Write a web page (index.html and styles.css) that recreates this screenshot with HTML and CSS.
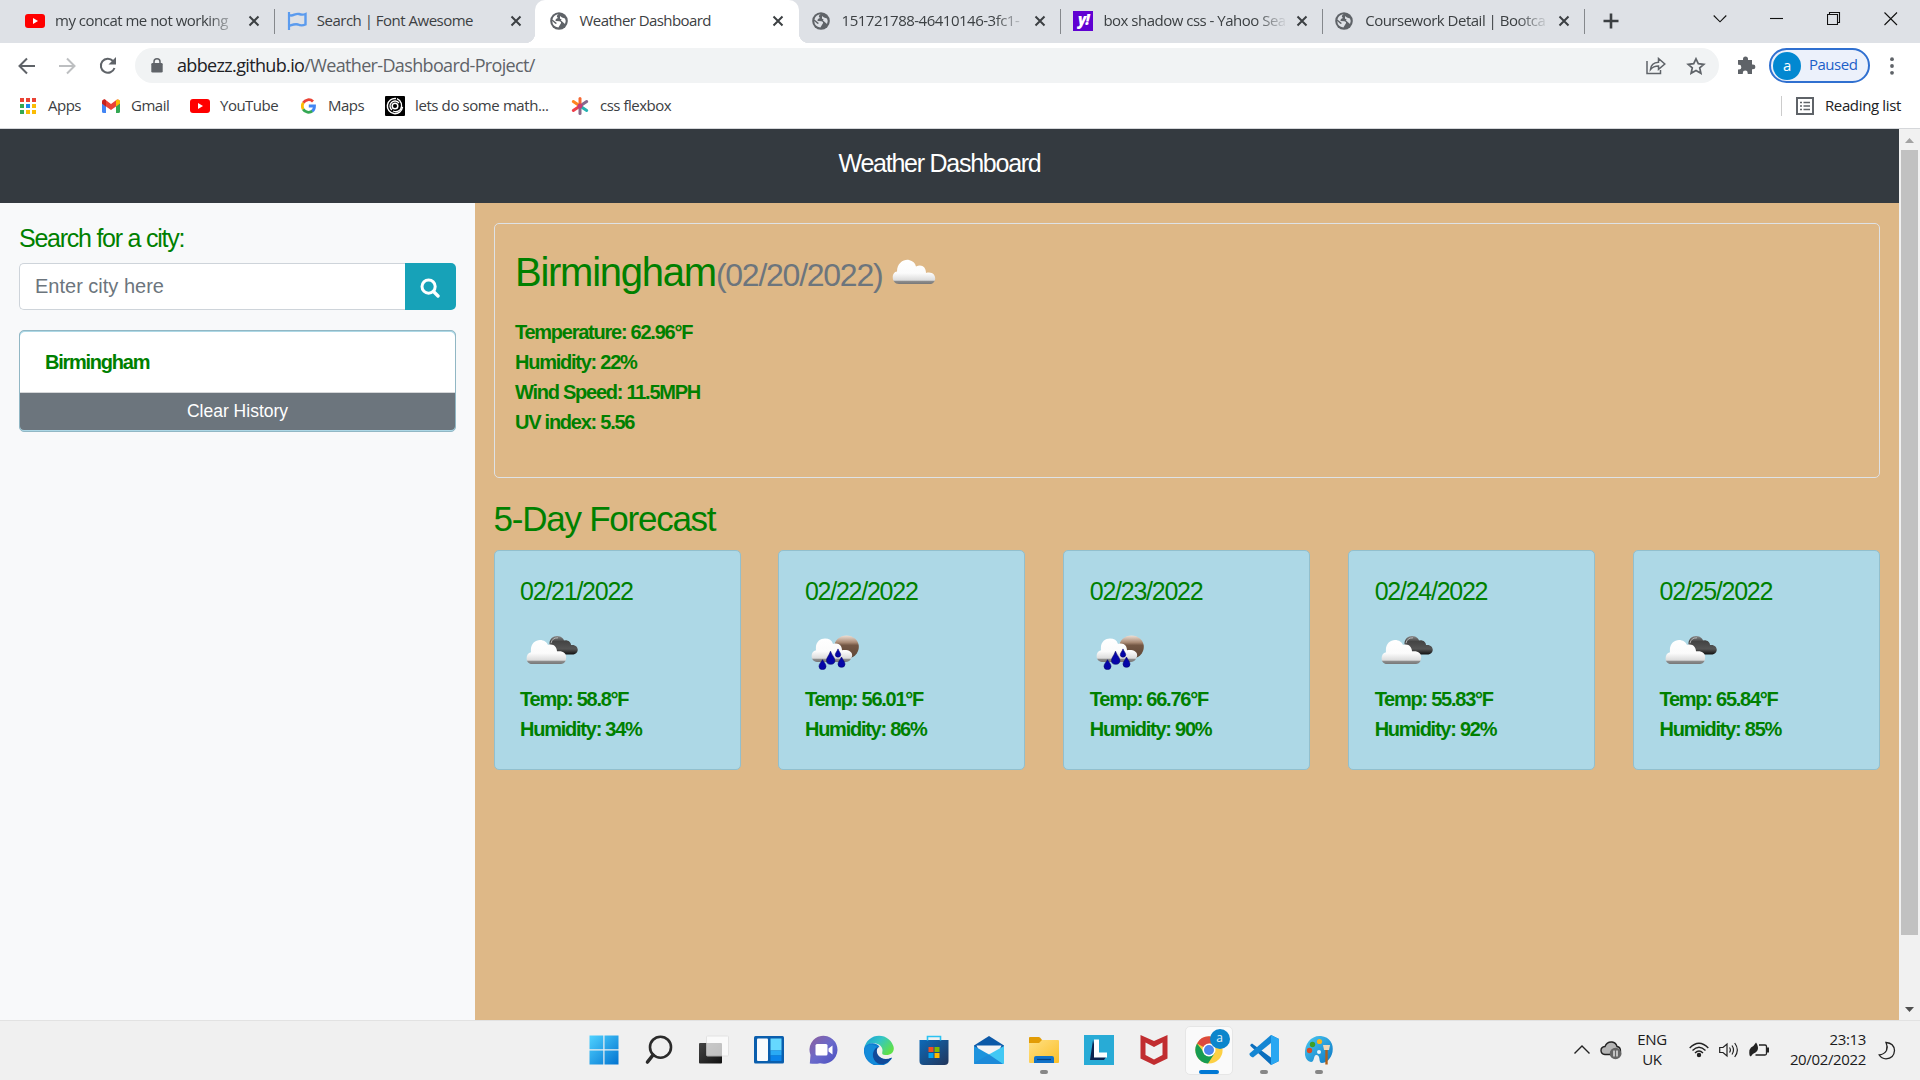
FILE: index.html
```html
<!DOCTYPE html>
<html lang="en">
<head>
<meta charset="utf-8">
<title>Weather Dashboard</title>
<link rel="stylesheet" href="styles.css">
</head>
<body>
<svg class="defs" width="0" height="0" aria-hidden="true">
  <defs>
    <linearGradient id="cloudFill" x1="0" y1="0" x2="0" y2="1"><stop offset="0" stop-color="#fff"/><stop offset=".55" stop-color="#fbfbfb"/><stop offset=".84" stop-color="#dcdcdc"/><stop offset=".89" stop-color="#8c8c8c"/><stop offset="1" stop-color="#777"/></linearGradient>
    <linearGradient id="darkCloud" x1="0" y1="0" x2="0" y2="1"><stop offset="0" stop-color="#8a8a8a"/><stop offset=".3" stop-color="#444"/><stop offset=".7" stop-color="#555"/><stop offset="1" stop-color="#111"/></linearGradient>
    <linearGradient id="moonFill" x1="0" y1="0" x2="0" y2="1"><stop offset="0" stop-color="#efe0d6"/><stop offset=".3" stop-color="#a98a74"/><stop offset=".42" stop-color="#735744"/><stop offset="1" stop-color="#5e4636"/></linearGradient>
    <linearGradient id="winFill" x1="0" y1="0" x2="1" y2="1"><stop offset="0" stop-color="#4fd2ff"/><stop offset="1" stop-color="#0273d0"/></linearGradient>
    <linearGradient id="chatFill" x1="0" y1="0" x2="1" y2="1"><stop offset="0" stop-color="#8f5f9c"/><stop offset=".5" stop-color="#6a6acb"/><stop offset="1" stop-color="#4b4fc0"/></linearGradient>
    <linearGradient id="edgeTop" x1="0" y1="0" x2="1" y2=".6"><stop offset="0" stop-color="#159bd7"/><stop offset=".5" stop-color="#34c6c4"/><stop offset="1" stop-color="#5fe04a"/></linearGradient>
    <linearGradient id="storeFill" x1="0" y1="0" x2="1" y2="1"><stop offset="0" stop-color="#0d6ab9"/><stop offset="1" stop-color="#21355a"/></linearGradient>
    <linearGradient id="folderFill" x1="0" y1="0" x2="1" y2="1"><stop offset="0" stop-color="#ffe083"/><stop offset="1" stop-color="#fbbf28"/></linearGradient>
    <linearGradient id="viewFill" x1="0" y1="0" x2="1" y2="1"><stop offset="0" stop-color="#444"/><stop offset="1" stop-color="#111"/></linearGradient>
    <linearGradient id="paintFill" x1="0" y1="0" x2="1" y2="1"><stop offset="0" stop-color="#4bc9f1"/><stop offset="1" stop-color="#0d78c5"/></linearGradient>
    <symbol id="globe" viewBox="0 0 18 18"><circle cx="9" cy="9" r="8.8" fill="#5f6368"/><path d="M8.6 2.2 Q5.3 4 8 6 Q5 7 5.6 9 L9.5 9.2 Q12 10 10.5 12 L8.4 15.6 Q2.6 14.6 2.2 9 L5 11.5 Q6 12.5 6.8 11 L2.4 7.4 Q3.8 2.7 8.6 2.2Z M10 4 L12 5.5 L15 6.5 Q16.5 9 15 12 L12.7 10 L10.8 8.2 Q12.5 7.3 10 6.8Z" fill="#dee1e6"/></symbol>
    <symbol id="globeWhite" viewBox="0 0 18 18"><circle cx="9" cy="9" r="8.8" fill="#5f6368"/><path d="M8.6 2.2 Q5.3 4 8 6 Q5 7 5.6 9 L9.5 9.2 Q12 10 10.5 12 L8.4 15.6 Q2.6 14.6 2.2 9 L5 11.5 Q6 12.5 6.8 11 L2.4 7.4 Q3.8 2.7 8.6 2.2Z M10 4 L12 5.5 L15 6.5 Q16.5 9 15 12 L12.7 10 L10.8 8.2 Q12.5 7.3 10 6.8Z" fill="#fff"/></symbol>
    <symbol id="youtube" viewBox="0 0 20 14"><rect width="20" height="14" rx="3" fill="#f00"/><path d="M8 4 L13 7 L8 10Z" fill="#fff"/></symbol>
    <symbol id="close" viewBox="0 0 12 12"><path d="M1.5 1.5 L10.5 10.5 M10.5 1.5 L1.5 10.5" stroke="#3c4043" stroke-width="2"/></symbol>
    <symbol id="cloud" viewBox="0 0 44 28"><path d="M7 27 C-1 27 -1 14 5 13.5 C5 4 12 0 17 1 C21 2 23 4 24 8 C30 5 34 9 34 15 C41 13 44 18 43 22.500 C42 26 40 27 37 27Z" fill="url(#cloudFill)"/></symbol>
    <symbol id="broken" viewBox="0 0 52 31" preserveAspectRatio="none"><path d="M24 12 C22 5 26 0 31 0 C36 0 38 4 38 5 C42 4 45 7 45 10 C51 9 53 15 51 18 C50 20 48 20.500 46 20.500 L34 20.500Z" fill="url(#darkCloud)"/><path d="M25 8 Q26 2 32 2" stroke="#bbb" fill="none"/><path d="M6 31 C-1 31 -1 19 5 18 C4 9 9 4.500 14 4.500 C18 4.500 21 7 22 10 C28 8 31 13 31 17 C38 16 41 20 40 25 C40 28 38 31 35 31Z" fill="url(#cloudFill)"/></symbol>
    <symbol id="rain" viewBox="0 0 48 39" preserveAspectRatio="none"><ellipse cx="35.500" cy="13.500" rx="12.300" ry="13" fill="url(#moonFill)"/><path d="M6 30 C-1 30 -1 18 5 17 C4 8 9 4 14 4 C18 4 21 6 22 10 C28 8 31 12 31 17 C38 16 42 19 41 24 C40 28 38 30 35 30Z" fill="url(#cloudFill)"/><g fill="#0505a8" stroke="#02026a" stroke-width=".6"><path d="M11.500 27.500 C10 31 8 32 8 35 A3.500 3.500 0 0 0 15 35 C15 32 13 31 11.500 27.500Z"/><path d="M19.500 18 C18 23 15.500 25 15.500 28.500 A4.200 4.200 0 0 0 23.900 28.500 C23.900 25 21 23 19.500 18Z"/><path d="M30.500 24.500 C29 28 27 30 27 32.500 A3.500 3.500 0 0 0 34 32.500 C34 30 32 28 30.500 24.500Z"/><path d="M27 15.500 C26 18.500 24.300 20 24.300 22 A2.700 2.700 0 0 0 29.700 22 C29.700 20 28 18.500 27 15.500Z"/></g></symbol>
  </defs>
</svg>

<div class="screen">
  <header class="tabstrip">
    <div class="tab"><span class="fav"><svg width="20" height="14"><use href="#youtube"/></svg></span><span class="tab-title fade">my concat me not working</span><svg class="x" width="12" height="12"><use href="#close"/></svg></div>
    <div class="tab no-sep"><span class="fav"><svg width="20" height="18" viewBox="0 0 20 18" fill="none" stroke="#5b9bee"><path d="M2 0V18" stroke-width="2.200"/><path d="M2 3 C6 5 8 1 12 2 C15 3 16 3 18.500 2 V12.500 C15 14 13 13.500 11 12.500 C8 11.500 5 13 2 14" stroke-width="2.400"/></svg></span><span class="tab-title">Search | Font Awesome</span><svg class="x" width="12" height="12"><use href="#close"/></svg></div>
    <div class="tab active"><span class="fav"><svg width="18" height="18"><use href="#globeWhite"/></svg></span><span class="tab-title">Weather Dashboard</span><svg class="x" width="12" height="12"><use href="#close"/></svg></div>
    <div class="tab late"><span class="fav"><svg width="18" height="18"><use href="#globe"/></svg></span><span class="tab-title fade">151721788-46410146-3fc1-</span><svg class="x" width="12" height="12"><use href="#close"/></svg></div>
    <div class="tab late"><span class="fav"><span class="yahoo">y!</span></span><span class="tab-title fade">box shadow css - Yahoo Sea</span><svg class="x" width="12" height="12"><use href="#close"/></svg></div>
    <div class="tab late"><span class="fav"><svg width="18" height="18"><use href="#globe"/></svg></span><span class="tab-title fade">Coursework Detail | Bootca</span><svg class="x" width="12" height="12"><use href="#close"/></svg></div>
    <svg class="plus" width="16" height="16" viewBox="0 0 16 16"><path d="M8 .5V15.500M.5 8H15.500" stroke="#3c4043" stroke-width="2.600"/></svg>
    <div class="window-controls">
      <svg width="14" height="14" viewBox="0 0 14 14"><path d="M.7 3.500L7 9.800L13.300 3.500"/></svg>
      <svg width="14" height="14" viewBox="0 0 14 14"><path d="M0 6.500H13"/></svg>
      <svg width="14" height="14" viewBox="0 0 14 14"><path d="M.5 2.500H10.500V12.500H.5ZM2.500 2.500V.5H12.500V10.500H10.500"/></svg>
      <svg width="14" height="14" viewBox="0 0 14 14"><path d="M.5 .5L13 13M13 .5L.5 13"/></svg>
    </div>
  </header>

  <div class="toolbar">
    <svg class="nav" width="18" height="18" viewBox="0 0 18 18"><path d="M17 9H2M9 1.500L1.500 9L9 16.500" stroke="#5f6368"/></svg>
    <svg class="nav" width="18" height="18" viewBox="0 0 18 18"><path d="M1 9H16M9 1.500L16.500 9L9 16.500" stroke="#bdbfc1"/></svg>
    <svg class="nav" width="18" height="18" viewBox="0 0 18 18"><path d="M15.500 11A7 7 0 1 1 14 4" stroke="#5f6368"/><path d="M17 0V7.500H9.500Z" fill="#5f6368"/></svg>
    <div class="omnibox">
      <svg width="12" height="15" viewBox="0 0 12 15"><rect x=".3" y="5" width="11.400" height="9.500" rx="1.300" fill="#5f6368"/><path d="M3 6V3.800A3 3 0 0 1 9 3.800V6" fill="none" stroke="#5f6368" stroke-width="1.500"/></svg>
      <span class="url">abbezz.github.io<span class="path">/Weather-Dashboard-Project/</span></span>
      <svg width="20" height="18" viewBox="0 0 20 18" fill="none" stroke="#5f6368" stroke-width="1.500"><path d="M1 4V16.500H14.500V13"/><path d="M4.500 12.500C5 7.500 8.500 5.500 12.500 5.300V1.500L18.800 7L12.500 12.300V9C9 9 6.500 10 4.500 12.500Z"/></svg>
      <svg class="star" width="20" height="18" viewBox="0 0 20 18"><path d="M10 1.800L12.300 6.700L17.800 7.300L13.700 10.800L14.900 16.200L10 13.400L5.100 16.200L6.300 10.800L2.200 7.300L7.700 6.700Z" fill="none" stroke="#5f6368" stroke-width="1.700"/></svg>
    </div>
    <svg class="puzzle" width="19" height="19" viewBox="0 0 19 19"><path d="M1 4H6V3A2.500 2.500 0 0 1 11 3V4H15V8.500H16A2.400 2.400 0 0 1 16 13.300H15V18H10.700V17A2.400 2.400 0 0 0 5.800 17V18H1V13.500H2A2.300 2.300 0 0 0 2 8.800H1Z" fill="#5f6368"/></svg>
    <div class="profile"><span class="avatar">a</span><span class="paused">Paused</span></div>
    <svg class="dots" width="4" height="18" viewBox="0 0 4 18" fill="#5f6368"><circle cx="2" cy="2.200" r="1.900"/><circle cx="2" cy="9" r="1.900"/><circle cx="2" cy="15.800" r="1.900"/></svg>
  </div>

  <div class="bookmarks">
    <div class="bm apps"><svg width="16" height="16" viewBox="0 0 16 16"><path d="M0 0h4v4H0zM6 0h4v4H6zM12 0h4v4h-4z" fill="#ea4335"/><path d="M0 6h4v4H0z" fill="#34a853"/><path d="M6 6h4v4H6z" fill="#1a88f0"/><path d="M12 6h4v4h-4zM6 12h4v4H6zM12 12h4v4h-4z" fill="#fbbc04"/><path d="M0 12h4v4H0z" fill="#34a853"/></svg><span>Apps</span></div>
    <div class="bm gmail"><svg width="18" height="14" viewBox="0 0 18 14"><path d="M0 3H4V14H1.500Q0 14 0 12.500Z" fill="#4285f4"/><path d="M14 3H18V12.500Q18 14 16.500 14H14Z" fill="#34a853"/><path d="M0 3Q0 0 3 .5L9 5L15 .5Q18 0 18 3V4.500L14 7.500L9 11L4 7.500L0 4.500Z" fill="#ea4335"/><path d="M14 1.300Q18-1 18 3V4.500L14 7.500Z" fill="#fbbc04"/><path d="M0 3Q.2 .5 2.500 .3L4 1.300V7.500L0 4.500Z" fill="#c5221f"/></svg><span>Gmail</span></div>
    <div class="bm yt"><svg width="20" height="14"><use href="#youtube"/></svg><span>YouTube</span></div>
    <div class="bm maps"><svg width="15" height="16" viewBox="0 0 15 16" fill="none" stroke-width="2.800"><path d="M2.300 4.800A6.200 6.200 0 0 1 12 3.500" stroke="#ea4335"/><path d="M2.200 11.200A6.300 6.300 0 0 1 2.300 4.800" stroke="#fbbc04"/><path d="M11.500 12.900A6.200 6.200 0 0 1 2.200 11.200" stroke="#34a853"/><path d="M7.800 8H13.500Q13.500 11.500 11.200 13.200" stroke="#4285f4"/></svg><span>Maps</span></div>
    <div class="bm math"><svg width="20" height="20" viewBox="0 0 20 20" fill="none" stroke="#fff"><rect width="20" height="20" rx="1" fill="#000" stroke="none"/><path d="M17.500 11A7.600 7.600 0 1 1 11 2.500" stroke-width="1.500"/><path d="M12 2.600A7.500 7.500 0 0 1 15.500 13.500Q12 17 8 15" stroke-width="1.300"/><path d="M14 7A5 5 0 1 0 7 14" stroke-width="1.300"/><circle cx="10" cy="10" r="2.800" stroke-width="1.500"/></svg><span>lets do some math...</span></div>
    <div class="bm css"><svg width="18" height="18" viewBox="0 0 18 18" stroke-width="3" stroke-linecap="round"><path d="M9 9L2.300 13.500" stroke="#ef3f49"/><path d="M9 9V16.500" stroke="#8a6a8c"/><path d="M9 9L15.700 13.500" stroke="#24b2b2"/><path d="M9 9L15.700 4.500" stroke="#87688d"/><path d="M9 9V1.500" stroke="#f66832"/><path d="M9 9L2.300 4.500" stroke="#ff8420"/><circle cx="9" cy="9" r="1" fill="#c43b77" stroke="#c43b77"/></svg><span>css flexbox</span></div>
    <div class="reading"><svg width="18" height="18" viewBox="0 0 18 18"><rect x="1" y="1" width="16" height="16" fill="none" stroke="#5f6368" stroke-width="2"/><path d="M4 5.500h2M4 9h2M4 12.500h2M7.500 5.500h6.500M7.500 9h6.500M7.500 12.500h6.500" stroke="#5f6368" stroke-width="1.600"/></svg><span>Reading list</span></div>
  </div>

  <div class="viewport">
    <div class="page">
      <header class="site-header">Weather Dashboard</header>
      <div class="columns">
        <aside class="sidebar">
          <h5 class="search-label">Search for a city:</h5>
          <div class="search-group">
            <div class="search-input">Enter city here</div>
            <div class="search-btn"><svg width="20" height="20" viewBox="0 0 20 20" fill="none" stroke="#fff"><circle cx="8.600" cy="8.600" r="6.600" stroke-width="3"/><path d="M13.500 13.500L18 18" stroke-width="3.400" stroke-linecap="round"/></svg></div>
          </div>
          <div class="history">
            <div class="history-item">Birmingham</div>
            <div class="clear-btn">Clear History</div>
          </div>
        </aside>
        <main class="content">
          <section class="current">
            <div class="current-title"><span class="city">Birmingham</span><span class="date">(02/20/2022)</span><svg class="now-icon" width="44" height="26" viewBox="0 0 44 28" preserveAspectRatio="none"><use href="#cloud" width="44" height="28"/></svg></div>
            <div class="line">Temperature: 62.96°F</div>
            <div class="line">Humidity: 22%</div>
            <div class="line">Wind Speed: 11.5MPH</div>
            <div class="line">UV index: 5.56</div>
          </section>
          <h3 class="forecast-title">5-Day Forecast</h3>
          <section class="forecast">
            <div class="day"><h5>02/21/2022</h5><div class="day-icon"><svg width="52" height="28"><use href="#broken"/></svg></div><div class="line">Temp: 58.8°F</div><div class="line">Humidity: 34%</div></div>
            <div class="day"><h5>02/22/2022</h5><div class="day-icon wet"><svg width="48" height="35"><use href="#rain"/></svg></div><div class="line">Temp: 56.01°F</div><div class="line">Humidity: 86%</div></div>
            <div class="day"><h5>02/23/2022</h5><div class="day-icon wet"><svg width="48" height="35"><use href="#rain"/></svg></div><div class="line">Temp: 66.76°F</div><div class="line">Humidity: 90%</div></div>
            <div class="day"><h5>02/24/2022</h5><div class="day-icon"><svg width="52" height="28"><use href="#broken"/></svg></div><div class="line">Temp: 55.83°F</div><div class="line">Humidity: 92%</div></div>
            <div class="day"><h5>02/25/2022</h5><div class="day-icon"><svg width="52" height="28"><use href="#broken"/></svg></div><div class="line">Temp: 65.84°F</div><div class="line">Humidity: 85%</div></div>
          </section>
        </main>
      </div>
    </div>
    <div class="scrollbar">
      <svg width="9" height="5" viewBox="0 0 9 5"><path d="M0 5L4.500 0L9 5Z" fill="#a3a3a3"/></svg>
      <div class="thumb"></div>
      <svg width="9" height="5" viewBox="0 0 9 5"><path d="M0 0L4.500 5L9 0Z" fill="#505050"/></svg>
    </div>
  </div>

  <footer class="taskbar">
    <div class="task"><svg width="30" height="30" viewBox="0 0 30 30"><path d="M.5 .5H14.300V14.300H.5ZM15.500 .5H29.500V14.300H15.500ZM.5 15.500H14.300V29.500H.5ZM15.500 15.500H29.500V29.500H15.500Z" fill="url(#winFill)"/></svg></div>
    <div class="task"><svg width="30" height="30" viewBox="0 0 30 30" fill="none" stroke="#2b2b2b"><circle cx="16.500" cy="12.200" r="10.500" stroke-width="2.600"/><path d="M9 20L3.500 27" stroke-width="3.600" stroke-linecap="round"/></svg></div>
    <div class="task"><svg width="30" height="30" viewBox="0 0 30 30"><rect x="0" y="8" width="23" height="20.500" rx="1" fill="url(#viewFill)"/><rect x="7.500" y="1" width="22" height="20" rx="1" fill="#fff" opacity=".72" stroke="#ddd"/></svg></div>
    <div class="task"><svg width="30" height="30" viewBox="0 0 30 30"><rect y="1" width="30" height="27.500" rx="1.500" fill="#0a5ead"/><rect x="3" y="3.500" width="11" height="22.500" rx="1" fill="#f9fbfd"/><rect x="16.500" y="3.500" width="11" height="12" fill="#66d8ff"/><rect x="16.500" y="15.500" width="11" height="5" fill="#29aaf5"/><rect x="16.500" y="20.500" width="11" height="5.500" fill="#0a84ea"/></svg></div>
    <div class="task"><svg width="30" height="30" viewBox="0 0 30 30"><path d="M.8 28.500L1.500 20A14 14 0 1 1 11 28.300Q6 29.300 .8 28.500Z" fill="url(#chatFill)"/><rect x="6.500" y="9" width="12" height="11.500" rx="1.500" fill="#fff"/><path d="M19.500 13.500L23.500 10.500V19.500L19.500 16.500Z" fill="#fff"/></svg></div>
    <div class="task"><svg width="30" height="30" viewBox="0 0 30 30"><path d="M.3 13A15 15 0 0 1 29.800 13C30 18 26 20.500 21 20C17 19.500 18.500 18 18.500 15C18 8 6 5 .3 13Z" fill="url(#edgeTop)"/><path d="M.2 13C3 7 13 7 15.500 12C10 13 11 25 24 24.500Q29 22 27.500 24A15 15 0 0 1 .2 13Z" fill="#0c7bd1"/><path d="M12 13C5 20 11 31 20 29Q25 27.500 28 22.500Q19 26.500 14 20Q11.500 16 14 12Z" fill="#114a9a"/><path d="M.2 14C3 8.500 9 8 13 12C6 16 8 27 16 30Q1 30 .2 14Z" fill="#148bd9"/></svg></div>
    <div class="task"><svg width="30" height="30" viewBox="0 0 30 30"><path d="M.5 5H29.500V26Q29.500 30 25.500 30H4.500Q.5 30 .5 26Z" fill="url(#storeFill)"/><path d="M8.500 5.500V1.500H21.500V5.500" fill="none" stroke="#2bc2f2" stroke-width="1.600"/><path d="M9.500 12H14.500V17H9.500Z" fill="#f25022"/><path d="M15.500 12H20.500V17H15.500Z" fill="#7fba00"/><path d="M9.500 18H14.500V23H9.500Z" fill="#00a4ef"/><path d="M15.500 18H20.500V23H15.500Z" fill="#ffb900"/></svg></div>
    <div class="task"><svg width="30" height="30" viewBox="0 0 30 30"><path d="M0 10.500L15 1L30 10.500V16H0Z" fill="#0c59a8"/><path d="M2.500 10.500H27.500L24 18H6Z" fill="#f4f4f6"/><path d="M0 11L15 19.500L30 29H1Q0 29 0 28Z" fill="#1d93dd"/><path d="M30 11L14 20L28.500 29H29Q30 29 30 28Z" fill="#42c8f4"/><path d="M0 28Q0 29 1 29H29L15 19.500Z" fill="#1c8ad9"/></svg></div>
    <div class="task running"><svg width="30" height="30" viewBox="0 0 30 30"><path d="M0 3Q0 2 1 2H10Q11 2 13 5V12H0Z" fill="#e29c05"/><path d="M0 8H10L13 5H29Q30 5 30 6V27Q30 28 29 28H1Q0 28 0 27Z" fill="url(#folderFill)"/><path d="M5 28V23Q5 21 7 21H23Q25 21 25 23V28Z" fill="#1172c8"/><path d="M8 24.500H22" stroke="#06427f" stroke-width="1.200"/></svg></div>
    <div class="task"><svg width="30" height="30" viewBox="0 0 30 30"><rect width="30" height="30" fill="#28abd6"/><path d="M9 5L6 25H20L22 22H13Z" fill="#0d2450"/><path d="M10 4.500H15V17.500H23V22.500H10Z" fill="#fff"/></svg></div>
    <div class="task"><svg width="30" height="30" viewBox="0 0 30 30"><path d="M1.500 0L15 6L28.500 0V23.500L15 30L1.500 23.500Z" fill="#c12d30"/><path d="M6.500 7.500L15 12L23.500 7.500V20L15 24.500L6.500 20Z" fill="#f0f0f0"/></svg></div>
    <div class="task current-app"><div class="chrome-wrap"><svg width="28" height="28" viewBox="0 0 28 28"><circle cx="14" cy="14" r="13.600" fill="#fdd044"/><path d="M14 14L2 7.400A13.600 13.600 0 0 1 26 7.600H14Z" fill="#dc4a3d"/><path d="M2 7.400A13.600 13.600 0 0 0 13 27.600L19.500 17.500L14 14L8 15Z" fill="#179c52"/><circle cx="14" cy="14" r="6.500" fill="#fff"/><circle cx="14" cy="14" r="5" fill="#4a87ee"/></svg><span class="chrome-badge">a</span></div></div>
    <div class="task running"><svg width="30" height="30" viewBox="0 0 30 30"><path d="M22 0L30 4V26L22 30L2 11.500Q0 10 3 8.500L22 22.500Z" fill="#0b6ebd"/><path d="M22 0V8L4 22.500Q0 21 .5 18.500Z" fill="#1486d3"/><path d="M22 0L30 4V26L22 30Z" fill="#29a7f2"/></svg></div>
    <div class="task running"><svg width="30" height="30" viewBox="0 0 30 30"><path d="M1 20C0 8 8 0 17 1C26 2 30 9 28.500 17C27 24 22 28 18 28C14 28 17 21 13 20C9 19 11 27 7 27Q2 26 1 20Z" fill="url(#paintFill)"/><circle cx="5.500" cy="15.500" r="2.700" fill="#d84b23"/><circle cx="8.500" cy="9.500" r="2.700" fill="#3d9f26"/><circle cx="15.500" cy="6.500" r="2.600" fill="#f6b520"/><circle cx="15" cy="17" r="2" fill="#e7f5fb"/><path d="M19 10H26L25 15H20Z" fill="#eed7b7"/><path d="M21.300 15H23.700V29.500H21.300Z" fill="#b0601a"/></svg></div>
    <div class="tray">
      <svg class="t-chev" width="18" height="12" viewBox="0 0 18 12"><path d="M1.500 9.500L9 2L16.500 9.500" fill="none" stroke="#222" stroke-width="1.400"/></svg>
      <svg class="t-cloud" width="22" height="20" viewBox="0 0 22 20"><path d="M5 14.500Q1 14 1 10.500Q1 7 5 6.500Q7 1.500 12 2Q16 2.500 17 6.500Q20.500 7 20.500 11V14.500Z" fill="#b5b5b5" stroke="#222" stroke-width="1.400"/><circle cx="15.500" cy="13.500" r="5.800" fill="#666"/><path d="M14 10.500V16.500M17 10.500V16.500" stroke="#fff" stroke-width="1.200"/></svg>
      <div class="lang">ENG<br>UK</div>
      <svg class="t-wifi" width="20" height="16" viewBox="0 0 20 16" fill="none" stroke="#222" stroke-width="1.400"><path d="M.7 6Q10-3.500 19.300 6M3.500 8.500Q10 2 16.500 8.500M6 11Q10 7 14 11"/><circle cx="10" cy="13" r="1.500" fill="#222"/></svg>
      <svg class="t-vol" width="20" height="16" viewBox="0 0 20 16" fill="none" stroke="#222" stroke-width="1.200"><path d="M.7 5.500H4L8 2V14L4 10.500H.7Z"/><path d="M10.500 5.500Q12.300 8 10.500 10.500M13 3.500Q16 8 13 12.500M15.700 1Q21 8 15.700 15"/></svg>
      <svg class="t-bat" width="20" height="16" viewBox="0 0 20 16"><path d="M10 3H16Q17.500 3 17.500 4.500V11.500Q17.500 13 16 13H6.500" fill="none" stroke="#222" stroke-width="1.300"/><path d="M18 5.500h2v5h-2z" fill="#222"/><path d="M7 .5C9.500 4 10 8.500 6.500 10.500Q3.500 11.500 1.800 14.500L.6 13.500Q-.5 8 2 5.500Q5 4 7 .5Z" fill="#222"/></svg>
      <div class="clock">23:13<br>20/02/2022</div>
      <svg class="t-moon" width="18" height="19" viewBox="0 0 18 19"><path d="M8 1.500Q16 2 16.500 9.500Q16 17.500 8 17.800Q3.500 17.500 1.200 14Q6 13.500 8.500 9.500Q10 5.500 8 1.500Z" fill="none" stroke="#222" stroke-width="1.300"/></svg>
    </div>
  </footer>
</div>
</body>
</html>
```
FILE: styles.css
```css
* { box-sizing: border-box; }
body { margin: 0; font-family: "Open Sans", "Noto Sans", sans-serif; overflow: hidden; }
svg { display: block; flex: none; }
.defs { position: absolute; }
.screen { width: 1920px; height: 1080px; display: flex; flex-direction: column; }
h3, h5 { margin: 0; font-weight: 400; }

/* Tab strip */
.tabstrip { height: 43px; background: #dee1e6; display: flex; padding-left: 12px; }
.tab { width: 261.800px; flex: none; height: 43px; display: flex; align-items: center; padding: 0 14px 1px 13px; font-size: 15px; letter-spacing: -.5px; color: #3c4043; position: relative; }
.tab::after { content: ""; position: absolute; right: -1px; top: 9px; width: 1px; height: 25px; background: #85888c; }
.tab.no-sep::after, .tab.active::after { display: none; }
.tab.active { width: 264px; margin: 0 0 0 -1px; background: #fff; border-radius: 10px 10px 0 0; padding: 0 15px 1px 15px; letter-spacing: -.57px; }
.tab.active .fav { width: 30px; }
.tab.active::before { content: ""; position: absolute; left: -10px; right: -10px; bottom: 0; height: 10px; background: radial-gradient(circle at 0 0, transparent 10px, #fff 10.5px) left / 10px 10px no-repeat, radial-gradient(circle at 100% 0, transparent 10px, #fff 10.5px) right / 10px 10px no-repeat; }
.fav { width: 30px; flex: none; }
.tab-title { width: 187px; flex: none; white-space: nowrap; line-height: 24px; padding-bottom: 2px; }
.fade { -webkit-mask-image: linear-gradient(90deg, #000 152px, transparent 185px); mask-image: linear-gradient(90deg, #000 152px, transparent 185px); }
.x { margin-left: auto; }
.yahoo { display: block; width: 20px; height: 20px; background: #6001d2; color: #fff; font: italic 800 15px/17px "Open Sans", sans-serif; text-align: center; letter-spacing: -1px; }
.plus { margin: 13px 0 0 19px; }
.window-controls { margin-left: auto; display: flex; gap: 43px; padding: 12px 22px 0 0; fill: none; stroke: #111; stroke-width: 1.1; }

/* Toolbar */
.toolbar { height: 45px; background: #fff; display: flex; align-items: center; padding-left: 18px; }
.nav { margin-right: 22px; fill: none; stroke-width: 2; }
.nav + .nav { margin-right: 23px; }
.nav + .nav + .nav { margin-right: 18px; }
.omnibox { width: 1584px; height: 35px; border-radius: 18px; background: #f1f3f4; display: flex; align-items: center; padding: 0 13px 0 16px; }
.url { flex: 1; padding: 0 0 2px 14px; font-size: 18px; letter-spacing: -.65px; color: #202124; white-space: nowrap; }
.path { color: #5f6368; }
.star { margin-left: 20px; }
.puzzle { margin-left: 18px; }
.profile { margin-left: 13px; width: 101px; height: 35px; border: 2px solid #3070d0; border-radius: 18px; background: #ecf1fb; display: flex; align-items: center; padding-left: 2px; color: #1c5fc8; font-size: 15px; letter-spacing: -.5px; }
.avatar { width: 28px; height: 28px; border-radius: 50%; background: #0288d1; color: #fff; text-align: center; font-size: 15px; line-height: 26px; }
.paused { padding: 0 0 3px 8px; }
.dots { margin-left: 20px; }

/* Bookmarks */
.bookmarks { height: 41px; background: #fff; border-bottom: 1px solid #d5d7da; display: flex; align-items: center; padding: 0 19px 4px 20px; font-size: 15px; letter-spacing: -.5px; color: #3c4043; white-space: nowrap; }
.bm, .reading { display: flex; align-items: center; gap: 10px; }
.bm span, .reading span { padding-bottom: 2px; }
.apps { width: 82px; gap: 12px; }
.gmail { width: 88px; gap: 11px; }
.yt { width: 111px; }
.maps { width: 84px; gap: 12px; }
.math { width: 186px; letter-spacing: -.4px; }
.css { gap: 11px; }
.reading { margin-left: auto; height: 20px; border-left: 1px solid #ccc; gap: 11px; padding-left: 14px; color: #202124; letter-spacing: -.35px; }

/* Page */
.viewport { height: 891px; display: flex; }
.page { width: 1899px; font-family: "Liberation Sans", Arial, sans-serif; color: green; letter-spacing: -1.25px; display: flex; flex-direction: column; }
.site-header { height: 74px; background: #343a40; color: #fff; font-size: 25px; line-height: 30px; padding: 19px 20px 0 0; text-align: center; }
.columns { flex: 1; display: flex; }
.sidebar { width: 475px; background: #f8f9fa; padding: 20px 19px; }
.search-label { font-size: 25px; line-height: 30px; margin-bottom: 10px; }
.search-group { height: 47px; display: flex; letter-spacing: 0; margin-bottom: 20px; }
.search-input { flex: 1; background: #fff; border: 1px solid #ced4da; border-right: 0; border-radius: 5px 0 0 5px; color: #6c757d; font-size: 20px; line-height: 45px; padding-left: 15px; }
.search-btn { width: 51px; background: #17a2b8; border-radius: 0 5px 5px 0; display: flex; align-items: center; justify-content: center; padding: 2px 1px 0 0; }
.history { height: 102px; border: 1px solid #91b7c4; border-radius: 5px; background: #add8e6; padding: 1px 0; display: flex; flex-direction: column; overflow: hidden; }
.history-item { height: 61px; background: #fff; border-bottom: 1px solid #d5d7d9; border-radius: 5px 5px 0 0; font-size: 20px; font-weight: 700; line-height: 60px; padding-left: 25px; }
.clear-btn { flex: 1; background: #6c757d; border-radius: 0 0 4px 4px; color: #fff; font-size: 17.5px; letter-spacing: 0; text-align: center; line-height: 36px; }
.content { flex: 1; background: #deb887; padding: 20px 19px 20px 18.600px; }
.current { height: 255px; border: 1px solid #dee2e6; border-radius: 5px; padding: 24px 20px 24px 20.400px; }
.current-title { display: flex; align-items: baseline; height: 48px; line-height: 48px; margin-bottom: 21px; }
.city { font-size: 40px; }
.date { font-size: 32px; color: #6c757d; }
.now-icon { align-self: flex-start; margin: 11px 0 0 10px; }
.line { font-size: 20px; font-weight: 700; line-height: 30px; }
.forecast-title { font-size: 35px; line-height: 42px; margin: 20px 0 10px; }
.forecast { display: grid; grid-template-columns: repeat(5, 1fr); gap: 37.850px; }
.day { height: 220px; background: #add8e6; border: 1px solid #92bfcd; border-radius: 5px; padding: 25px 20px 25px 25.500px; white-space: nowrap; }
.day h5 { font-size: 25px; line-height: 30px; }
.day-icon { height: 78px; padding: 30px 0 0 6px; }
.day-icon.wet { padding-top: 29px; }

/* Scrollbar */
.scrollbar { width: 21px; background: #f1f1f1; display: flex; flex-direction: column; align-items: center; justify-content: space-between; padding: 9px 0 8px; }
.thumb { width: 17px; height: 785px; background: #c1c1c1; margin: 7px 0 auto; }

/* Taskbar */
.taskbar { height: 60px; background: #f0f0f0; border-top: 1px solid #e2e2e2; display: flex; padding-left: 576px; }
.task { width: 55px; height: 59px; display: flex; align-items: center; justify-content: center; position: relative; padding-bottom: 1px; }
.running::after, .current-app::after { content: ""; position: absolute; left: 24px; top: 49px; width: 8px; height: 4px; border-radius: 2px; background: #868686; }
.current-app::after { left: 18px; width: 20px; background: #0078d4; }
.chrome-wrap { width: 48px; height: 49px; background: #fafafa; border: 1px solid #e6e6e6; border-radius: 5px; display: flex; align-items: center; justify-content: center; position: relative; }
.chrome-badge { position: absolute; right: 2px; top: 2px; width: 20px; height: 20px; border-radius: 50%; background: #0c86cc; color: #e4f2fa; font-size: 12px; line-height: 17px; text-align: center; }
.tray { margin-left: auto; display: flex; align-items: center; padding: 0 24px 1px 0; font-size: 15px; line-height: 20px; letter-spacing: -.35px; color: #1b1b1b; }
.t-cloud { margin-left: 9px; }
.lang { width: 30px; margin: -2px 0 0 15px; text-align: center; }
.t-wifi { margin-left: 22px; }
.t-vol { margin-left: 10px; }
.t-bat { margin-left: 10px; }
.clock { width: 80px; margin: -2px 0 0 17px; text-align: right; }
.t-moon { margin-left: 12px; }
```
